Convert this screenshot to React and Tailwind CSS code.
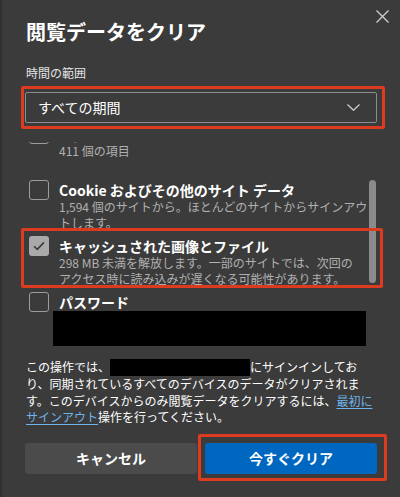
import React from 'react';

const font = { fontFamily: '"Noto Sans CJK JP", "Noto Sans", sans-serif' };

/**
 * チェックボックス
 */
const Box = ({ checked }) => (
  <div
    className={`w-[20px] h-[20px] shrink-0 rounded-[3px] flex items-center justify-center ${
      checked ? 'bg-[#a9a9a9]' : 'border border-[#9c9c9c]'
    }`}
  >
    {checked && (
      <svg width="12" height="10" viewBox="0 0 12 10" fill="none">
        <path d="M1 5.2 L4.3 8.4 L11 1.4" stroke="#3a3a3a" strokeWidth="1.6" />
      </svg>
    )}
  </div>
);

const Item = ({ title, lines = [], checked, children }) => (
  <div className="flex pl-[3px] h-[56px]">
    <div className="-mt-px">
      <Box checked={checked} />
    </div>
    <div className="ml-[10px] flex-1">
      <div className="text-[14px] leading-[18px] font-bold text-white whitespace-nowrap">{title}</div>
      {lines.map((l, i) => (
        <div key={i} className="text-[12px] leading-[16px] text-[#b0b0b0] whitespace-nowrap">
          {l}
        </div>
      ))}
      {children}
    </div>
  </div>
);

const App = () => {
  return (
    <div className="w-[400px] h-[497px] bg-[#3b3b3b] relative overflow-hidden border-l-2 border-[#303030]" style={font}>
      {/* 閉じる */}
      <svg className="absolute top-[10px] left-[374px]" width="13" height="13" viewBox="0 0 13 13" fill="none">
        <path d="M0.5 0.5 L12.5 12.5 M12.5 0.5 L0.5 12.5" stroke="#d0d0d0" strokeWidth="1.3" />
      </svg>

      <div className="pl-[24px] pr-[20px] pt-[20px]">
        <h1 className="text-[20px] leading-[24px] font-bold text-white">閲覧データをクリア</h1>
        <div className="mt-[21px] text-[12px] leading-[16px] text-[#e4e4e4]">時間の範囲</div>

        {/* 時間の範囲 */}
        <div className="mt-[11px] -ml-px w-[352px] h-[31px] border border-[#8c8c8c] rounded-[2px] flex items-center justify-between pl-[12px] pr-[16px]">
          <span className="text-[14px] text-white">すべての期間</span>
          <svg width="13" height="7" viewBox="0 0 13 7" fill="none">
            <path d="M0.5 0.5 L6.5 6.3 L12.5 0.5" stroke="#d0d0d0" strokeWidth="1.2" />
          </svg>
        </div>

        {/* 項目リスト */}
        <div className="mt-[19px] h-[208px] overflow-hidden relative">
          <div className="-mt-[17px]">
            <Item title="閲覧の履歴" lines={['411 個の項目']} />
            <Item
              title="Cookie およびその他のサイト データ"
              lines={['1,594 個のサイトから。ほとんどのサイトからサインアウ', 'トします。']}
            />
            <Item
              checked
              title="キャッシュされた画像とファイル"
              lines={['298 MB 未満を解放します。一部のサイトでは、次回の', 'アクセス時に読み込みが遅くなる可能性があります。']}
            />
            <Item title="パスワード">
              <div className="-ml-[6px] w-[313px] h-[35px] bg-black" />
            </Item>
          </div>
          <div className="absolute left-[343px] top-[38px] w-[7px] h-[103px] rounded-full bg-[#8b8b8b]" />
        </div>

        {/* 説明 */}
        <div className="mt-[9px] text-[12px] leading-[16.5px] text-white whitespace-nowrap">
          <div className="flex items-center">
            この操作では、<span className="inline-block w-[140px] h-[17px] bg-black" />にサインインしてお
          </div>
          <div>り、同期されているすべてのデバイスのデータがクリアされま</div>
          <div>
            す。このデバイスからのみ閲覧データをクリアするには、
            <span className="text-[#6fb3ea] underline underline-offset-2">最初に</span>
          </div>
          <div>
            <span className="text-[#6fb3ea] underline underline-offset-2">サインアウト</span>操作を行ってください。
          </div>
        </div>

        {/* ボタン */}
        <div className="mt-[17px] -ml-px flex gap-[8px]">
          <button className="w-[172px] h-[31px] rounded-[3px] bg-[#4b4b4b] text-white text-[14px] font-bold">
            キャンセル
          </button>
          <button className="w-[172px] h-[31px] rounded-[3px] bg-[#0067c0] text-white text-[14px] font-bold">
            今すぐクリア
          </button>
        </div>
      </div>

      {/* 注釈の赤枠 */}
      <div className="absolute left-[19px] top-[86px] w-[364px] h-[43px] border-[3px] border-[#dc3b1f] rounded-[2px]" />
      <div className="absolute left-[19px] top-[228px] w-[362px] h-[60px] border-[3px] border-[#dc3b1f] rounded-[2px]" />
      <div className="absolute left-[196px] top-[434px] w-[189px] h-[47px] border-[3px] border-[#dc3b1f] rounded-[2px]" />
    </div>
  );
};

export default App;
